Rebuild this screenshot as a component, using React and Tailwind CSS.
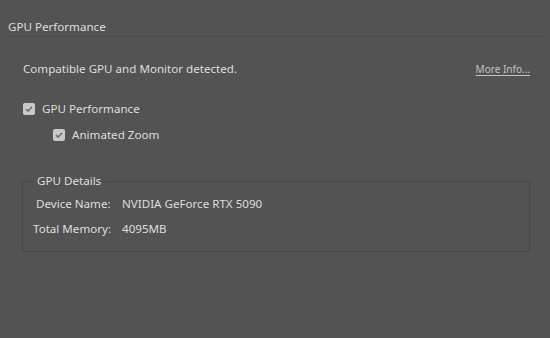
import React from 'react';

const Check = ({ className }) => (
  <span className={"flex items-center justify-center w-[12px] h-[12px] rounded-[2px] bg-[#c9c9c9] " + className}>
    <svg width="10" height="10" viewBox="0 0 10 10">
      <path d="M2 5.2 L4.1 7.2 L8 2.8" fill="none" stroke="#6e6e6e" strokeWidth="1.6" />
    </svg>
  </span>
);

const App = () => {
  return (
    <div className="w-[550px] h-[338px] bg-[#535353] text-[#dedede] text-[11.6px] leading-[16px] font-['Noto_Sans',sans-serif] overflow-hidden">
      <div className="px-[8px] pt-[19px]">
        <div className="h-[16px]">GPU Performance</div>
        <div className="mt-[1px] mr-[-2px] border-t border-[#4a4a4a]"></div>
      </div>

      <div className="pl-[23px] pr-[20px] pt-[24px]">
        <div className="flex justify-between items-center h-[16px]">
          <span>Compatible GPU and Monitor detected.</span>
          <a href="#" className="text-[10px] text-[#c4c4c4] underline underline-offset-2">More Info...</a>
        </div>

        <div className="mt-[24px] flex items-center gap-[7px] h-[16px]">
          <Check />
          <span>GPU Performance</span>
        </div>
        <div className="mt-[10px] ml-[30px] flex items-center gap-[7px] h-[16px]">
          <Check />
          <span>Animated Zoom</span>
        </div>

        <div className="relative mt-[38px] ml-[-1px] w-[508px] h-[71px] border border-[#474747] rounded-[2px]">
          <span className="absolute left-[10px] top-[-9px] px-[4px] bg-[#535353]">GPU Details</span>
          <div className="pt-[14px] flex flex-col gap-[9px]">
            <div className="flex h-[16px]">
              <span className="w-[99px] pl-[13px]">Device Name:</span>
              <span>NVIDIA GeForce RTX 5090</span>
            </div>
            <div className="flex h-[16px]">
              <span className="w-[99px] pl-[10px]">Total Memory:</span>
              <span>4095MB</span>
            </div>
          </div>
        </div>
      </div>
    </div>
  );
};

export default App;
